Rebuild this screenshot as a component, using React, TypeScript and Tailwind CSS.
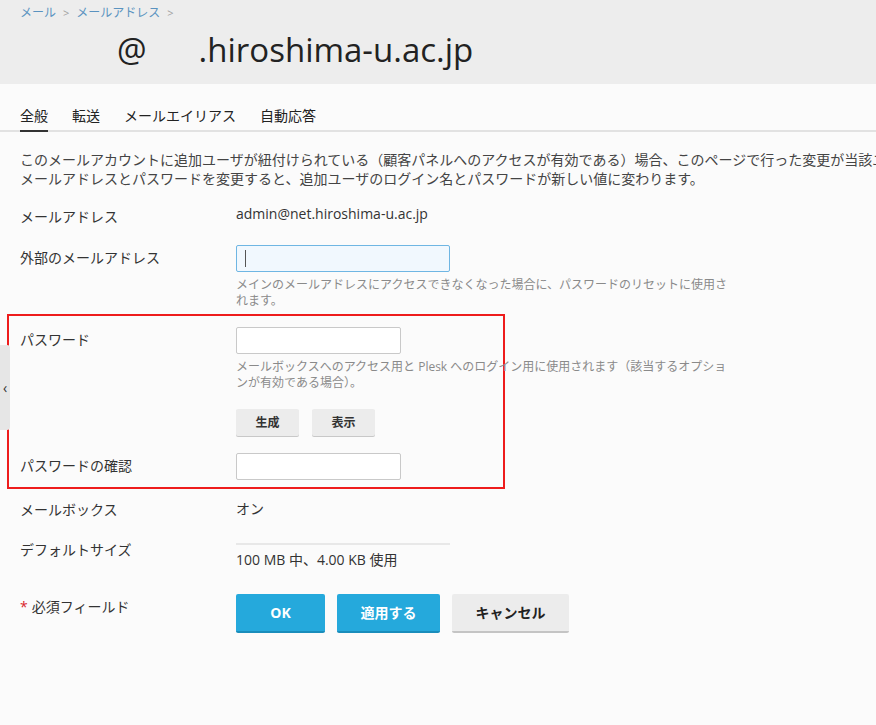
import React from "react";

const font = { fontFamily: '"Open Sans", "Noto Sans CJK JP", sans-serif' };

function Label({ children }: { children: React.ReactNode }) {
  return <div className="w-[216px] shrink-0 text-[14px] leading-[20px] text-[#333]">{children}</div>;
}

function GrayBtn({ children }: { children: React.ReactNode }) {
  return (
    <button className="w-[63px] h-[27px] bg-[#ececec] rounded-[2px] shadow-[0_1px_0_#c8c8c8] text-[12px] font-bold text-[#333] flex items-center justify-center">
      {children}
    </button>
  );
}

export default function App() {
  return (
    <div className="relative w-[876px] h-[725px] overflow-hidden bg-[#fbfbfb] text-[#333]" style={font}>
      {/* Header */}
      <div className="h-[84px] bg-[#ededed] px-[20px] pt-[4px]">
        <div className="flex items-center text-[12px] leading-[18px] text-[#5a93c0]">
          <span>メール</span>
          <span className="mx-[7px] text-[#a0a0a0] text-[11px]">&gt;</span>
          <span>メールアドレス</span>
          <span className="mx-[7px] text-[#a0a0a0] text-[11px]">&gt;</span>
        </div>
        <div className="mt-[8px] pl-[97px] flex text-[33px] leading-[40px] text-[#222]">
          <span>@</span>
          <span className="ml-[52px]">.hiroshima-u.ac.jp</span>
        </div>
      </div>

      {/* Tabs */}
      <div className="border-b-2 border-[#e2e2e2] flex gap-[24px] px-[20px] pt-[22px] text-[14px] leading-[20px] text-[#222]">
        <div className="pb-[4px] -mb-[2px] border-b-2 border-[#333]">全般</div>
        <div className="pb-[4px]">転送</div>
        <div className="pb-[4px]">メールエイリアス</div>
        <div className="pb-[4px]">自動応答</div>
      </div>

      {/* Description */}
      <div className="mt-[18px] px-[20px] text-[14px] leading-[19px] text-[#444] whitespace-nowrap">
        <div>このメールアカウントに追加ユーザが紐付けられている（顧客パネルへのアクセスが有効である）場合、このページで行った変更が当該ユーザにも適用されます。</div>
        <div>メールアドレスとパスワードを変更すると、追加ユーザのログイン名とパスワードが新しい値に変わります。</div>
      </div>

      {/* Mail address */}
      <div className="mt-[19px] px-[20px] flex">
        <Label>メールアドレス</Label>
        <div className="text-[14px] leading-[20px] -mt-[3px] text-[#333]">admin@net.hiroshima-u.ac.jp</div>
      </div>

      {/* External mail */}
      <div className="mt-[18px] px-[20px] flex items-start">
        <div className="pt-[3px]">
          <Label>外部のメールアドレス</Label>
        </div>
        <div>
          <div className="relative w-[214px] h-[27px]">
            <input className="w-full h-full border border-[#6fb6e3] rounded-[2px] bg-[#f1f8fe] outline-none px-[8px] text-[14px]" />
            <span className="absolute left-[9px] top-[5px] w-[1px] h-[17px] bg-[#555]" />
          </div>
          <div className="mt-[5px] text-[12px] leading-[16px] text-[#8a8a8a] whitespace-nowrap">
            メインのメールアドレスにアクセスできなくなった場合に、パスワードのリセットに使用さ
            <br />
            れます。
          </div>
        </div>
      </div>

      {/* Red annotated group */}
      <div className="mt-[5px] ml-[7px] w-[498px] border-2 border-[#ee1c1c] pl-[11px] pt-[11px] pb-[7px]">
        <div className="flex items-start">
          <div className="pt-[3px]">
            <Label>パスワード</Label>
          </div>
          <div>
            <input className="w-[165px] h-[27px] border border-[#c9c9c9] rounded-[2px] bg-white outline-none" />
            <div className="mt-[5px] text-[12px] leading-[16px] text-[#8a8a8a] whitespace-nowrap">
              メールボックスへのアクセス用と Plesk へのログイン用に使用されます（該当するオプショ
              <br />
              ンが有効である場合）。
            </div>
            <div className="mt-[18px] flex gap-[13px]">
              <GrayBtn>生成</GrayBtn>
              <GrayBtn>表示</GrayBtn>
            </div>
          </div>
        </div>
        <div className="mt-[17px] flex items-start">
          <div className="pt-[3px]">
            <Label>パスワードの確認</Label>
          </div>
          <input className="w-[165px] h-[27px] border border-[#c9c9c9] rounded-[2px] bg-white outline-none" />
        </div>
      </div>

      {/* Mailbox */}
      <div className="mt-[11px] px-[20px] flex">
        <Label>メールボックス</Label>
        <div className="text-[14px] leading-[20px] -mt-[1px] text-[#333]">オン</div>
      </div>

      {/* Default size */}
      <div className="mt-[20px] px-[20px] flex items-start">
        <Label>デフォルトサイズ</Label>
        <div className="pt-[3px]">
          <div className="w-[214px] h-[2px] bg-[#e8e8e8]" />
          <div className="mt-[5px] text-[14px] leading-[20px] text-[#333]">100 MB 中、4.00 KB 使用</div>
        </div>
      </div>

      {/* Actions */}
      <div className="mt-[24px] px-[20px] flex items-start">
        <div className="pt-[3px]">
          <Label>
            <span className="text-[#d9262b] mr-[4px]">*</span>必須フィールド
          </Label>
        </div>
        <div className="flex gap-[12px]">
          <button className="w-[89px] h-[39px] rounded-[2px] bg-[#25a9dc] border-b-2 border-[#1a8dbb] text-white text-[14px] font-bold">
            OK
          </button>
          <button className="w-[103px] h-[39px] rounded-[2px] bg-[#25a9dc] border-b-2 border-[#1a8dbb] text-white text-[14px] font-bold">
            適用する
          </button>
          <button className="w-[117px] h-[39px] rounded-[2px] bg-[#ececec] border-b-2 border-[#c4c4c4] text-[#222] text-[14px] font-bold">
            キャンセル
          </button>
        </div>
      </div>

      {/* Left collapse tab */}
      <div className="absolute left-0 top-[345px] w-[10px] h-[85px] bg-[#e6e6e6] rounded-r-[3px] flex items-center justify-center text-[14px] text-[#333]">
        ‹
      </div>
    </div>
  );
}
